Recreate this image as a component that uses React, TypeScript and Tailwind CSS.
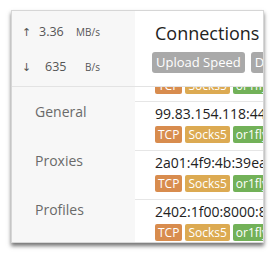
import React from "react";

const rows = [
  { host: "162.159.200.1:443" },
  { host: "99.83.154.118:443" },
  { host: "2a01:4f9:4b:39ea::2:443" },
  { host: "2402:1f00:8000:800::2:443" },
];

function Tag({ label, color }: { label: string; color: string }) {
  return (
    <span
      className={`flex h-[17px] items-center rounded-[2px] px-[3px] text-[12px] leading-none text-white ${color}`}
    >
      {label}
    </span>
  );
}

function ConnRow({ host }: { host: string }) {
  return (
    <div className="h-[49px] shrink-0 border-t border-[#e6e6e6] pl-[20px] pt-[2px]">
      <div className="h-[20px] whitespace-nowrap text-[14px] leading-[20px] text-[#222]">
        {host}
      </div>
      <div className="mt-[2px] flex gap-[3px] whitespace-nowrap">
        <Tag label="TCP" color="bg-[#d88c4e]" />
        <Tag label="Socks5" color="bg-[#dcaa52]" />
        <Tag label="or1fly-proxy" color="bg-[#72b158]" />
      </div>
    </div>
  );
}

export default function App() {
  return (
    <div
      className="h-[255px] w-[275px] overflow-hidden bg-white pl-[11px] pt-[10px]"
      style={{ fontFamily: '"Open Sans", "DejaVu Sans", sans-serif' }}
    >
      <div className="flex h-[233px] w-[253px] overflow-hidden border border-[#d6d6d6] bg-white shadow-[0_3px_4px_rgba(0,0,0,0.55)]">
        {/* sidebar */}
        <div className="flex w-[123px] shrink-0 flex-col bg-[#f7f7f7]">
          <div className="flex h-[76px] flex-col gap-[15px] border-b border-[#e3e3e3] pl-[10px] pt-[11px] text-[#555]">
            <div className="flex h-[20px] items-center">
              <span className="w-[17px] text-[11px]">↑</span>
              <span className="w-[37px] text-[12.5px]">3.36</span>
              <span className="w-[24px] text-right text-[10px]">MB/s</span>
            </div>
            <div className="flex h-[20px] items-center">
              <span className="w-[17px] text-[11px]">↓</span>
              <span className="w-[37px] pl-[6px] text-[12.5px]">635</span>
              <span className="w-[24px] text-right text-[10px]">B/s</span>
            </div>
          </div>
          {["General", "Proxies", "Profiles"].map((n) => (
            <div
              key={n}
              className="flex h-[49px] items-center pl-[23px] text-[14px] text-[#6a6a6a]"
            >
              {n}
            </div>
          ))}
        </div>

        {/* main */}
        <div className="flex min-w-0 flex-1 flex-col overflow-hidden">
          <div className="h-[76px] shrink-0 border-b border-[#e3e3e3] pl-[17px] pt-[9px]">
            <div className="ml-[3px] h-[26px] whitespace-nowrap text-[18px] leading-[26px] text-[#222]">
              Connections
            </div>
            <div className="mt-[6px] flex gap-[6px] whitespace-nowrap">
              <span className="flex h-[21px] items-center rounded-[3px] bg-[#a9a9a9] px-[4px] text-[13px] text-white">
                Upload Speed
              </span>
              <span className="flex h-[21px] items-center rounded-[3px] bg-[#a9a9a9] px-[4px] text-[13px] text-white">
                Download Speed
              </span>
            </div>
          </div>
          <div className="flex-1 overflow-hidden">
            <div className="-mt-[35px] flex flex-col">
              {rows.map((r) => (
                <ConnRow key={r.host} host={r.host} />
              ))}
            </div>
          </div>
        </div>
      </div>
    </div>
  );
}
